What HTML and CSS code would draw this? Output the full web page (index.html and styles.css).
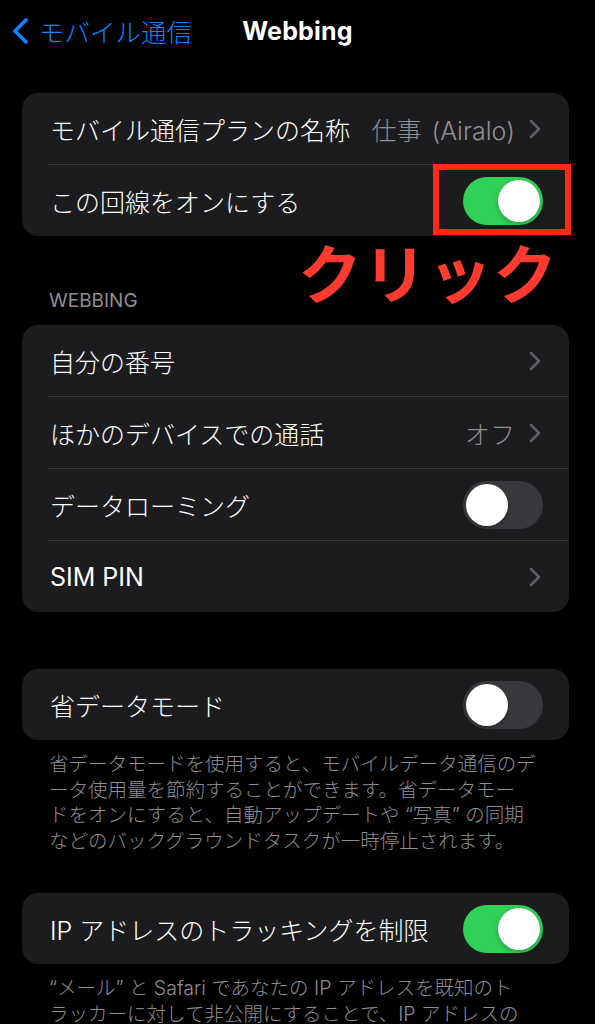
FILE: index.html
```html
<!DOCTYPE html>
<html lang="ja">
<head>
    <meta charset="UTF-8">
    <meta name="viewport" content="width=device-width, initial-scale=1.0">
    <title>Webbing</title>
    <link rel="stylesheet" href="styles.css">
</head>
<body>

<div class="screen">
    <div class="nav">
        <div class="back">
            <svg class="back-icon" width="20" height="26" viewBox="0 0 20 26">
                <path d="M15 2 L4 13 L15 24" fill="none" stroke="#0a84ff" stroke-width="3.6" stroke-linecap="round" stroke-linejoin="round"/>
            </svg>
            <span>モバイル通信</span>
        </div>
        <div class="title">Webbing</div>
        <div></div>
    </div>

    <div class="group first">
        <div class="row">
            <span class="label">モバイル通信プランの名称</span>
            <span class="value">仕事 (Airalo)</span>
            <svg class="chev" width="12" height="20" viewBox="0 0 12 20"><path d="M2 2 L10 10 L2 18"/></svg>
        </div>
        <div class="row">
            <span class="label">この回線をオンにする</span>
            <div class="toggle on"><div class="knob"></div></div>
        </div>
    </div>

    <div class="section-head">WEBBING</div>
    <div class="group">
        <div class="row">
            <span class="label">自分の番号</span>
            <svg class="chev" width="12" height="20" viewBox="0 0 12 20"><path d="M2 2 L10 10 L2 18"/></svg>
        </div>
        <div class="row">
            <span class="label">ほかのデバイスでの通話</span>
            <span class="value">オフ</span>
            <svg class="chev" width="12" height="20" viewBox="0 0 12 20"><path d="M2 2 L10 10 L2 18"/></svg>
        </div>
        <div class="row">
            <span class="label">データローミング</span>
            <div class="toggle"><div class="knob"></div></div>
        </div>
        <div class="row">
            <span class="label latin">SIM PIN</span>
            <svg class="chev" width="12" height="20" viewBox="0 0 12 20"><path d="M2 2 L10 10 L2 18"/></svg>
        </div>
    </div>

    <div class="group spaced">
        <div class="row">
            <span class="label">省データモード</span>
            <div class="toggle"><div class="knob"></div></div>
        </div>
    </div>
    <p class="foot">
        省データモードを使用すると、モバイルデータ通信のデ<br>
        ータ使用量を節約することができます。省データモー<br>
        ドをオンにすると、自動アップデートや “写真” の同期<br>
        などのバックグラウンドタスクが一時停止されます。
    </p>

    <div class="group spaced-small">
        <div class="row">
            <span class="label">IP アドレスのトラッキングを制限</span>
            <div class="toggle on"><div class="knob"></div></div>
        </div>
    </div>
    <p class="foot">
        “メール” と Safari であなたの IP アドレスを既知のト<br>
        ラッカーに対して非公開にすることで、IP アドレスの
    </p>

    <!-- annotation over the screenshot -->
    <div class="mark"></div>
    <div class="click-note">クリック</div>
</div>

</body>
</html>
```

FILE: styles.css
```css
body {
    margin: 0;
    padding: 0;
    background-color: #000;
    color: #fff;
    font-family: "Inter", "Noto Sans CJK JP", sans-serif;
    font-weight: 300;
}
.screen {
    position: relative;
    width: 595px;
    height: 1024px;
    overflow: hidden;
}
.nav {
    display: grid;
    grid-template-columns: 1fr auto 1fr;
    align-items: center;
    height: 61px;
}
.back {
    display: flex;
    align-items: center;
    gap: 8px;
    padding-left: 11px;
    color: #0a84ff;
    font-size: 25.5px;
}
.title {
    font-size: 25px;
    font-weight: 700;
    letter-spacing: 0.2px;
}
.group {
    background-color: #1c1c1e;
    border-radius: 16px;
    margin: 0 26px 0 22px;
}
.group.first {
    margin-top: 32px;
}
.group.spaced {
    margin-top: 57px;
}
.group.spaced-small {
    margin-top: 39px;
}
.row {
    display: flex;
    align-items: center;
    height: 71px;
    margin-left: 26px;
    padding: 0 26px 0 2px;
    font-size: 25px;
}
.row + .row {
    border-top: 1px solid #363638;
}
.label {
    flex: 1;
    white-space: nowrap;
}
.latin {
    font-weight: 400;
}
.value {
    color: #8e8e93;
    margin-right: 14px;
    white-space: nowrap;
    word-spacing: 3px;
}
.chev {
    margin-right: 2px;
}
.chev path {
    fill: none;
    stroke: #5e5e63;
    stroke-width: 2.6;
    stroke-linecap: round;
    stroke-linejoin: round;
}
.toggle {
    position: relative;
    width: 80px;
    height: 48px;
    border-radius: 24px;
    background-color: #39393d;
    flex: none;
}
.toggle.on {
    background-color: #30d158;
}
.knob {
    position: absolute;
    top: 3px;
    left: 3px;
    width: 42px;
    height: 42px;
    border-radius: 50%;
    background-color: #fff;
    box-shadow: 0 2px 5px rgba(0,0,0,0.25);
}
.toggle.on .knob {
    left: 35px;
}
.section-head {
    padding: 53px 0 12px 49px;
    line-height: 24px;
    font-size: 19px;
    font-weight: 400;
    color: #8d8d93;
}
.foot {
    margin: 0;
    padding: 12px 20px 0 49px;
    font-size: 19.5px;
    line-height: 25.5px;
    color: #8d8d93;
    white-space: nowrap;
}
.mark {
    position: absolute;
    left: 433px;
    top: 164px;
    width: 126px;
    height: 59px;
    border: 6px solid #ff2a12;
}
.click-note {
    position: absolute;
    left: 298px;
    top: 243px;
    font-size: 64px;
    line-height: 64px;
    font-weight: 700;
    color: #ff3b30;
    letter-spacing: 1px;
}
```
